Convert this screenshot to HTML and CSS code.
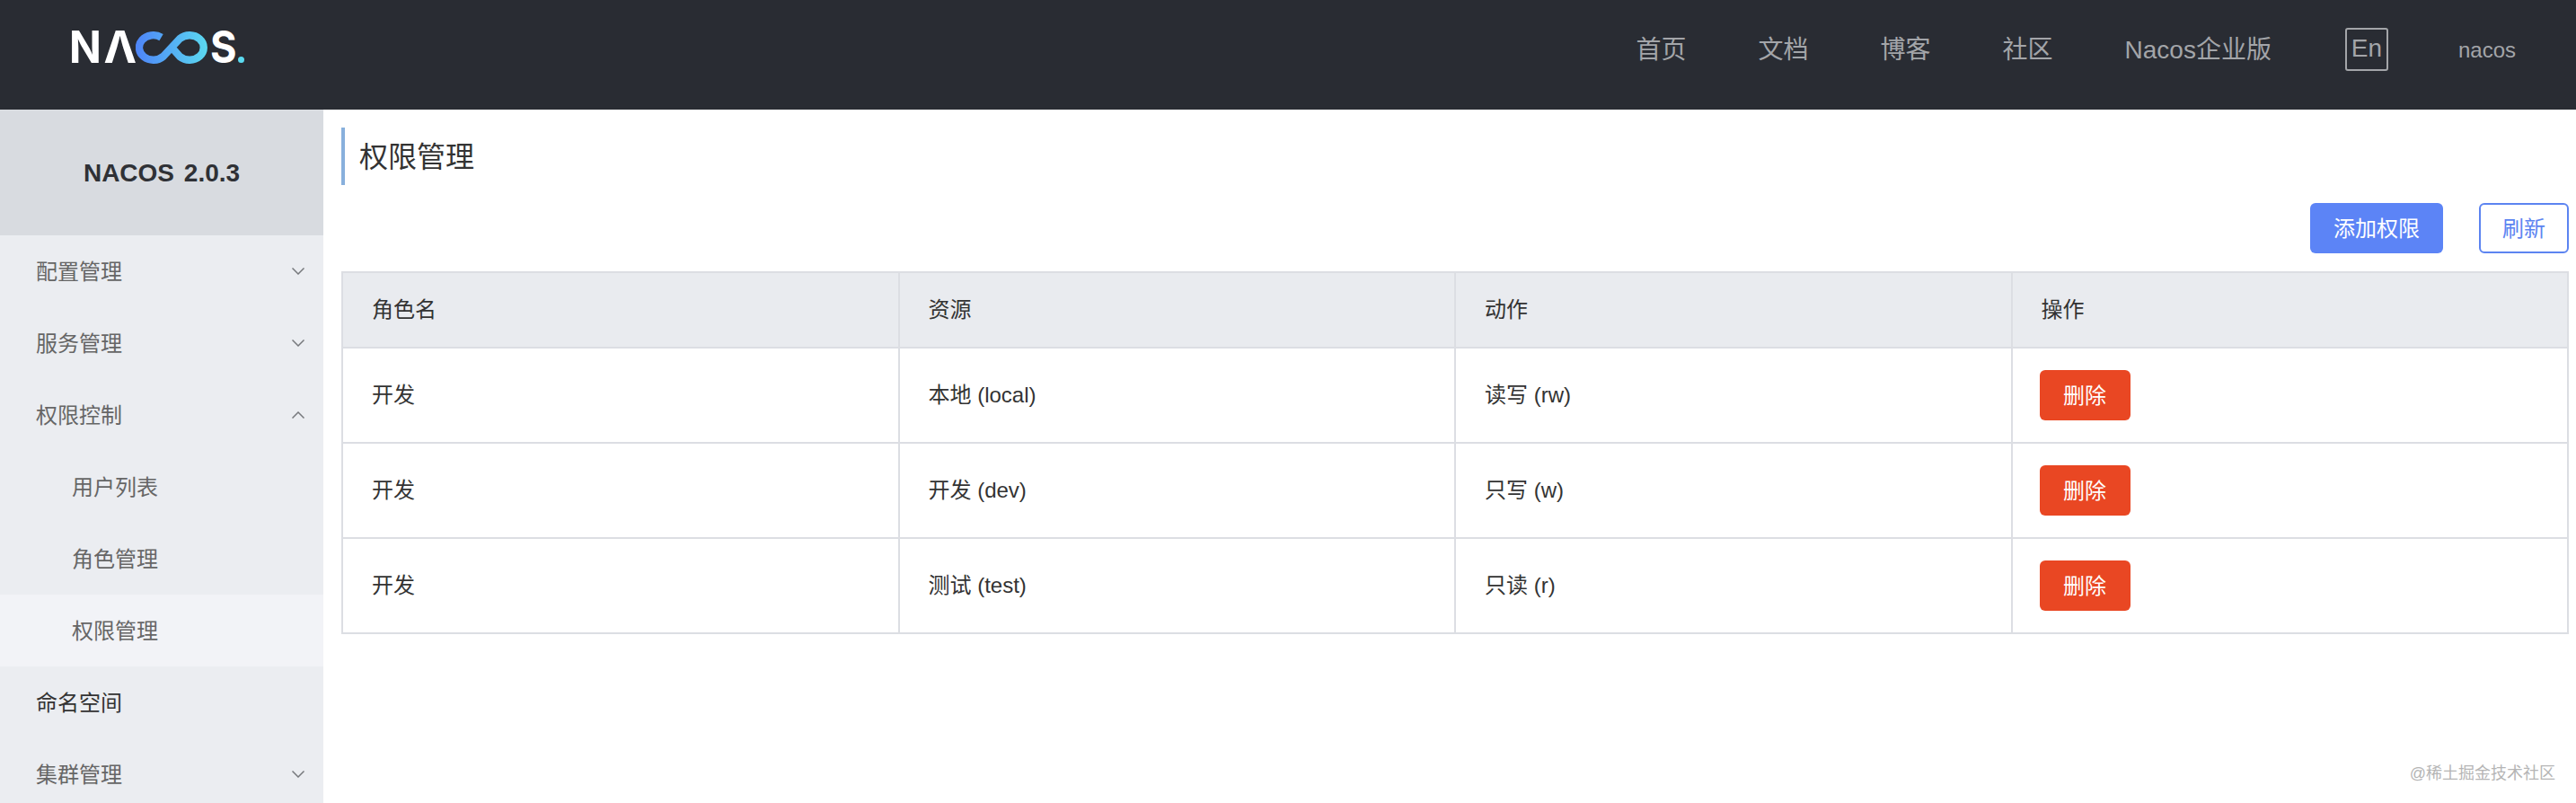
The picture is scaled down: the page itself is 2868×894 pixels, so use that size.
FILE: index.html
```html
<!DOCTYPE html>
<html lang="zh-CN">
<head>
  <meta charset="UTF-8">
  <title>权限管理</title>
  <link rel="stylesheet" href="styles.css">
</head>
<body>

<!-- Header -->
<div class="header">
  <div class="logo">
    <span class="logo-letter logo-n">N</span>
    <span class="logo-letter logo-a">Λ</span>
    <svg class="logo-loop" width="82" height="36" viewBox="0 0 82 36" fill="none">
      <defs>
        <linearGradient id="loop-grad" x1="0" y1="0" x2="82" y2="0" gradientUnits="userSpaceOnUse">
          <stop offset="0" stop-color="#4e84f8"/>
          <stop offset="1" stop-color="#5bdaf0"/>
        </linearGradient>
      </defs>
      <path d="M29 6.4A16 14 0 1 0 31.3 27.9L50 7.8A16 14 0 1 1 50 28.2L41 18" stroke="url(#loop-grad)" stroke-width="8.5"/>
    </svg>
    <span class="logo-letter logo-s">S</span>
    <span class="logo-dot"></span>
  </div>
  <div class="nav">
    <span class="nav-item">首页</span>
    <span class="nav-item">文档</span>
    <span class="nav-item">博客</span>
    <span class="nav-item">社区</span>
    <span class="nav-item">Nacos企业版</span>
    <span class="lang-btn">En</span>
    <span class="user-name">nacos</span>
  </div>
</div>

<div class="layout">
  <!-- Sidebar -->
  <div class="sidebar">
    <div class="version">NACOS 2.0.3</div>
    <div class="menu-item"><span>配置管理</span>
      <svg class="chevron" width="14" height="8" viewBox="0 0 14 8"><path d="M0.5 0.5L7 7L13.5 0.5"/></svg>
    </div>
    <div class="menu-item"><span>服务管理</span>
      <svg class="chevron" width="14" height="8" viewBox="0 0 14 8"><path d="M0.5 0.5L7 7L13.5 0.5"/></svg>
    </div>
    <div class="menu-item"><span>权限控制</span>
      <svg class="chevron" width="14" height="8" viewBox="0 0 14 8"><path d="M0.5 7.5L7 1L13.5 7.5"/></svg>
    </div>
    <div class="menu-item sub"><span>用户列表</span></div>
    <div class="menu-item sub"><span>角色管理</span></div>
    <div class="menu-item sub active"><span>权限管理</span></div>
    <div class="menu-item plain"><span>命名空间</span></div>
    <div class="menu-item"><span>集群管理</span>
      <svg class="chevron" width="14" height="8" viewBox="0 0 14 8"><path d="M0.5 0.5L7 7L13.5 0.5"/></svg>
    </div>
  </div>

  <!-- Content -->
  <div class="content">
    <div class="page-title">权限管理</div>
    <div class="toolbar">
      <button class="btn btn-primary">添加权限</button>
      <button class="btn btn-outline">刷新</button>
    </div>
    <table class="perm-table">
      <thead>
        <tr><th>角色名</th><th>资源</th><th>动作</th><th>操作</th></tr>
      </thead>
      <tbody>
        <tr>
          <td>开发</td><td>本地 (local)</td><td>读写 (rw)</td>
          <td class="action-cell"><button class="btn btn-danger">删除</button></td>
        </tr>
        <tr>
          <td>开发</td><td>开发 (dev)</td><td>只写 (w)</td>
          <td class="action-cell"><button class="btn btn-danger">删除</button></td>
        </tr>
        <tr>
          <td>开发</td><td>测试 (test)</td><td>只读 (r)</td>
          <td class="action-cell"><button class="btn btn-danger">删除</button></td>
        </tr>
      </tbody>
    </table>
  </div>
</div>

<div class="watermark">@稀土掘金技术社区</div>

</body>
</html>
```

FILE: styles.css
```css
body {
  font-family: "Liberation Sans", "Noto Sans CJK SC", sans-serif;
  margin: 0;
  height: 894px;
  overflow: hidden;
  background-color: #ffffff;
  color: #333;
}

.header {
  height: 122px;
  box-sizing: border-box;
  padding: 0 67px 16px 80px;
  background-color: #292c33;
  display: flex;
  justify-content: space-between;
  align-items: center;
}

.logo {
  display: flex;
  align-items: center;
  width: 192px;
  height: 36px;
}

.logo-letter {
  font-family: Inter, sans-serif;
  font-weight: 700;
  font-size: 49px;
  line-height: 36px;
  color: #ffffff;
}

.logo-n {
  width: 39px;
  margin-left: -3px;
  transform: scaleX(0.96);
  transform-origin: left center;
}

.logo-a {
  width: 36px;
}

.logo-s {
  width: 31px;
  margin-left: 2px;
  transform: scaleX(0.92);
  transform-origin: left center;
}

.logo-dot {
  width: 7px;
  height: 7px;
  margin-top: 27px;
  border-radius: 50%;
  background-color: #5bdaf0;
}

.nav {
  display: flex;
  align-items: center;
  color: #a3a5a9;
}

.nav-item {
  font-size: 28px;
  margin-left: 80px;
  white-space: nowrap;
}

.lang-btn {
  width: 48px;
  height: 48px;
  box-sizing: border-box;
  margin-left: 82px;
  margin-top: 4px;
  border: 2px solid #a3a5a9;
  border-radius: 3px;
  font-size: 28px;
  line-height: 42px;
  text-align: center;
}

.user-name {
  font-size: 24px;
  margin-left: 78px;
  margin-top: 6px;
}

.layout {
  display: flex;
  height: 772px;
}

.sidebar {
  width: 360px;
  flex-shrink: 0;
  background-color: #ebedf1;
  overflow: hidden;
}

.version {
  height: 140px;
  line-height: 142px;
  background-color: #d8dbe0;
  text-align: center;
  font-size: 28px;
  font-weight: bold;
  word-spacing: 3px;
  color: #2f3136;
}

.menu-item {
  height: 80px;
  padding: 0 21px 0 40px;
  display: flex;
  justify-content: space-between;
  align-items: center;
  font-size: 24px;
  color: #666;
}

.menu-item span {
  margin-bottom: 4px;
}

.menu-item.sub {
  padding-left: 80px;
}

.menu-item.active {
  background-color: #f2f3f7;
}

.menu-item.plain {
  color: #333;
}

.chevron {
  fill: none;
  stroke: #77797d;
  stroke-width: 1.5;
}

.content {
  flex: 1;
  padding: 20px 8px 0 20px;
}

.page-title {
  height: 64px;
  line-height: 66px;
  padding-left: 16px;
  border-left: 4px solid #88b0dc;
  font-size: 32px;
  color: #333;
}

.toolbar {
  display: flex;
  justify-content: flex-end;
  gap: 40px;
  margin-top: 20px;
}

.btn {
  height: 56px;
  padding: 0 0 4px;
  border: none;
  border-radius: 6px;
  font-family: inherit;
  font-size: 24px;
  cursor: pointer;
}

.btn-primary {
  width: 148px;
  background-color: #5c84f6;
  color: #ffffff;
}

.btn-outline {
  width: 100px;
  background-color: #ffffff;
  border: 2px solid #5c84f1;
  color: #5c84f1;
}

.btn-danger {
  width: 101px;
  margin-left: -2px;
  background-color: #e94723;
  color: #ffffff;
}

.perm-table {
  width: 2480px;
  margin-top: 20px;
  border-collapse: collapse;
  table-layout: fixed;
  font-size: 24px;
  color: #333;
}

.perm-table th,
.perm-table td {
  box-sizing: border-box;
  border: 2px solid #dcdee3;
  padding: 0 0 6px 32px;
  text-align: left;
  font-weight: normal;
}

.perm-table th {
  height: 84px;
  background-color: #e9ebef;
}

.perm-table td {
  height: 106px;
}

.perm-table td.action-cell {
  padding-bottom: 0;
}

.watermark {
  position: absolute;
  right: 23px;
  bottom: 22px;
  font-size: 18px;
  color: #b5b5b5;
}
```
